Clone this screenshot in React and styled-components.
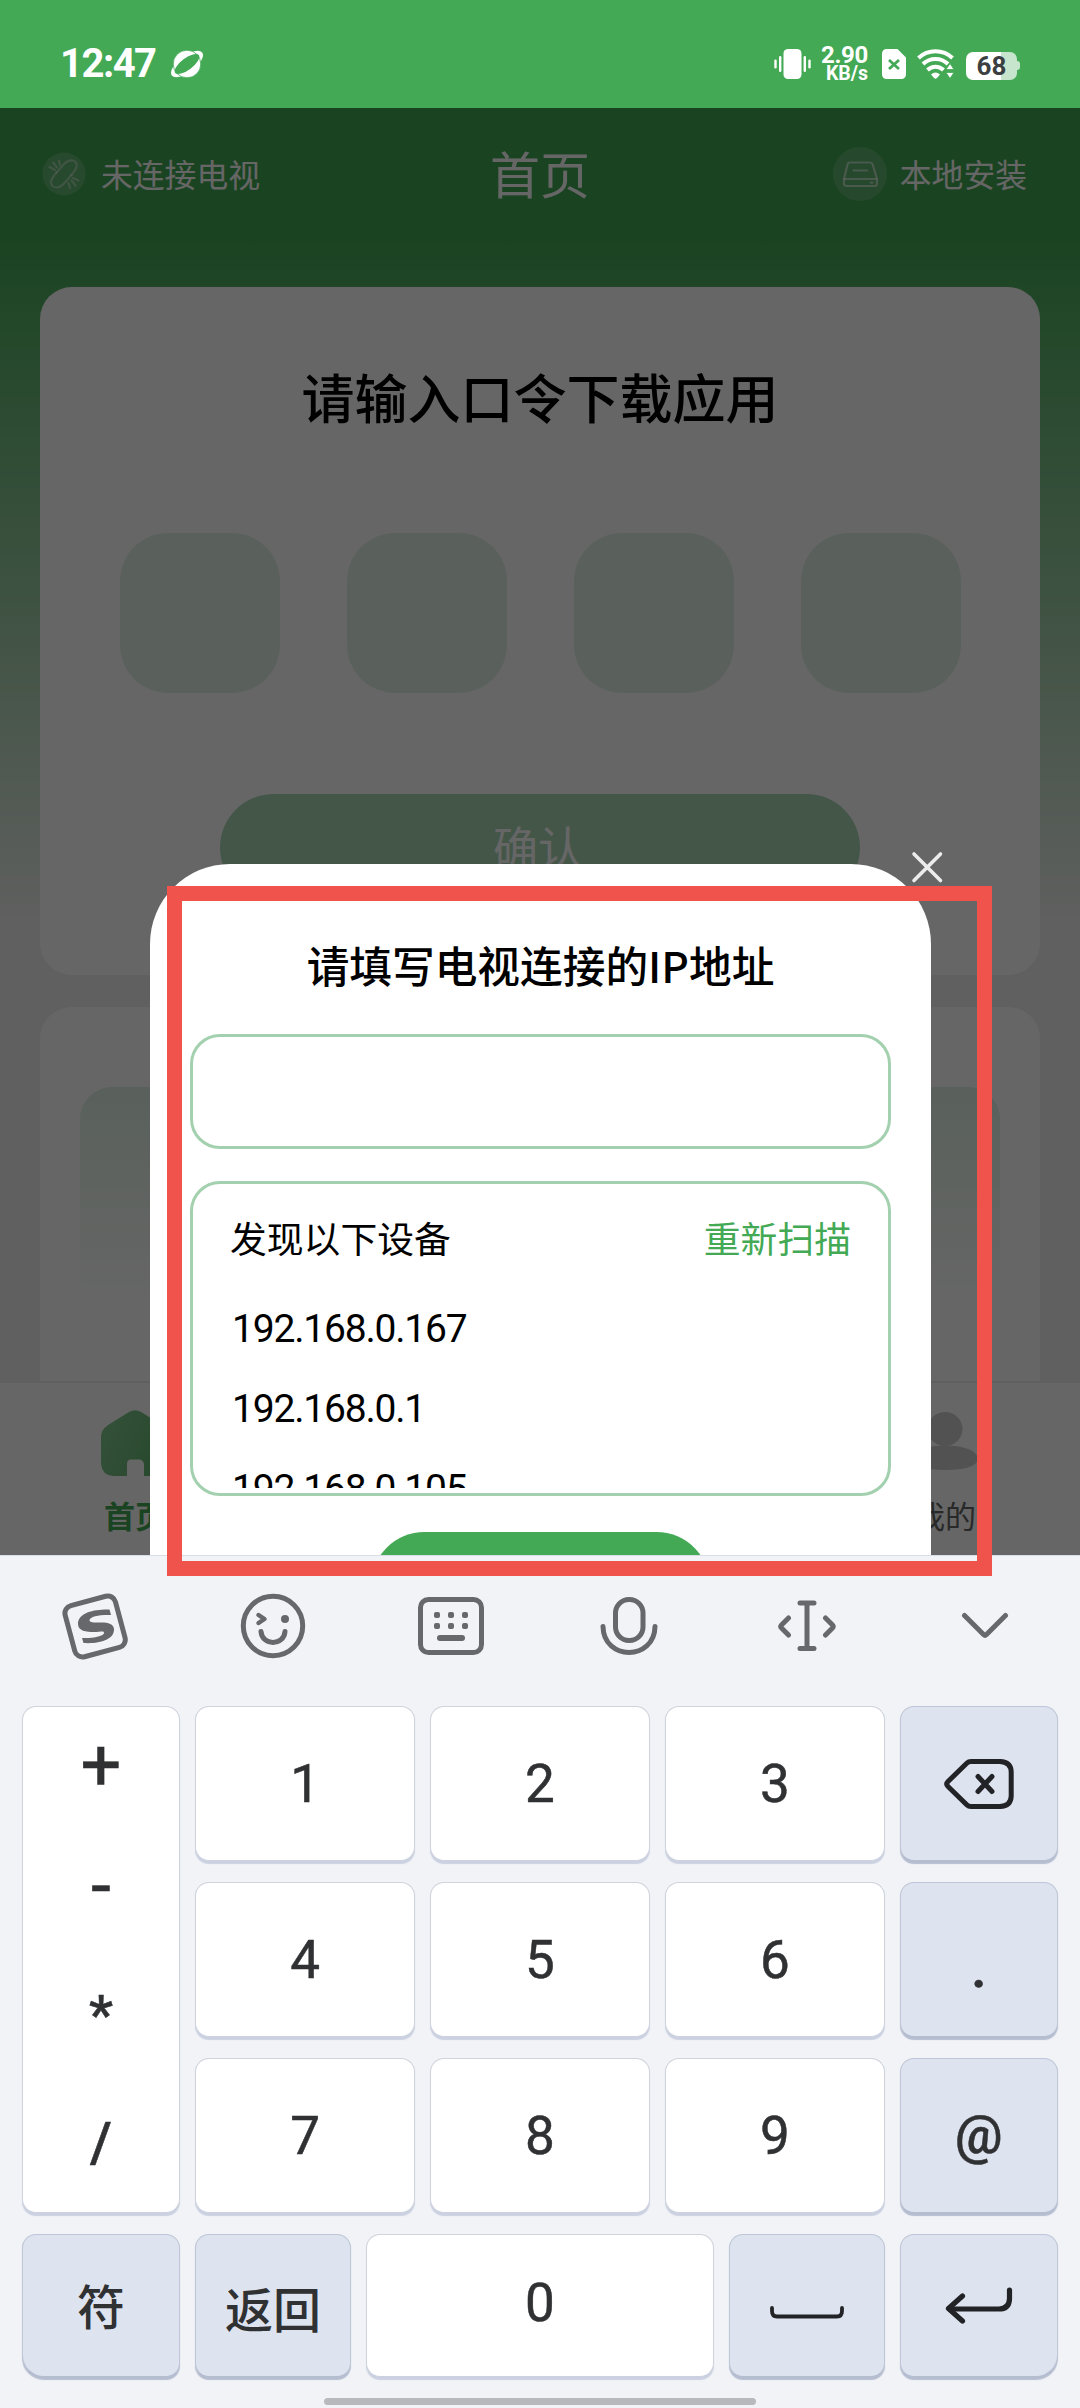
import React from "react";
import styled, { createGlobalStyle } from "styled-components";

const sans = `Roboto, "Noto Sans CJK SC", sans-serif`;
const cjk = `"Noto Sans CJK SC", sans-serif`;
const green = "#43a955";

const GlobalStyle = createGlobalStyle`
  * { box-sizing: border-box; }
  body { margin: 0; background: #f0f0f0; font-family: ${sans}; }
`;

const Screen = styled.div`
  position: relative;
  width: 1080px;
  height: 2408px;
  overflow: hidden;
  display: flex;
  flex-direction: column;
`;

/* ---------- status bar ---------- */
const StatusBar = styled.header`
  height: 108px;
  flex: none;
  display: flex;
  align-items: center;
  justify-content: space-between;
  padding: 20px 60px 0 60px;
  background: ${green};
  color: #fff;
`;
const StatusGroup = styled.div`
  display: flex;
  align-items: center;
  gap: ${(p) => p.$gap}px;
`;
const Clock = styled.span`
  width: 97px;
  font: 700 40px/40px ${sans};
  letter-spacing: -1.5px;
  white-space: nowrap;
`;
const NetSpeed = styled.div`
  display: flex;
  flex-direction: column;
  align-items: flex-end;
  width: 46px;
  margin-right: 3px;
  font-weight: 700;
`;
const SpeedValue = styled.span`
  font-size: 24px;
  line-height: 20px;
  letter-spacing: -0.3px;
`;
const SpeedUnit = styled.span`
  font-size: 19.5px;
  line-height: 18px;
`;
const Battery = styled.div`
  display: flex;
  align-items: center;
  padding-top: 3px;
`;
const BatteryBody = styled.div`
  width: 51px;
  height: 28px;
  border-radius: 7px;
  background: linear-gradient(90deg, #fff 69%, #c7e5cc 69%);
  color: #3b3f42;
  font: 700 26px/29px ${sans};
  text-align: center;
`;
const BatteryTip = styled.div`
  width: 3px;
  height: 9px;
  border-radius: 0 3px 3px 0;
  background: #c7e5cc;
`;

/* ---------- app page ---------- */
const Stage = styled.main`
  position: relative;
  height: 1447px;
  flex: none;
  overflow: hidden;
`;
const Page = styled.div`
  height: 100%;
  display: flex;
  flex-direction: column;
  background: linear-gradient(180deg, ${green} 132px, #f0f0f0 822px);
`;
const AppBar = styled.div`
  height: 179px;
  flex: none;
  display: grid;
  grid-template-columns: 1fr auto 1fr;
  align-items: center;
  padding: 0 53px 48px 42px;
  color: #fff;
`;
const BarAction = styled.div`
  display: flex;
  align-items: center;
  justify-self: ${(p) => (p.$end ? "end" : "start")};
  gap: ${(p) => (p.$end ? 13 : 15)}px;
  font: 400 31.8px/44px ${cjk};
`;
const BarLabel = styled.span`
  padding-bottom: 2px;
`;
const BarTitle = styled.h1`
  margin: 0 0 4px 11px;
  font: 400 50px/60px ${cjk};
`;
const Card = styled.section`
  flex: none;
  margin: 0 40px;
  height: ${(p) => p.$height}px;
  border-radius: ${(p) => (p.$open ? "32px 32px 0 0" : "32px")};
  background: #fff;
  display: flex;
  flex-direction: column;
  align-items: center;
`;
const CardTitle = styled.h2`
  margin: 74px 0 100.5px;
  font: 500 53px/71px ${cjk};
  color: #000;
`;
const CodeRow = styled.div`
  display: flex;
  gap: 67px;
`;
const CodeBox = styled.div`
  width: 160px;
  height: 160px;
  border-radius: 48px;
  background: #e1f2e6;
`;
const ConfirmButton = styled.div`
  margin-top: 101px;
  width: 640px;
  height: 107px;
  padding-right: 4px;
  border-radius: 54px;
  background: #aad7b4;
  color: #fff;
  font: 400 45px/103px ${cjk};
  text-align: center;
`;
const Banner = styled.div`
  margin-top: 80px;
  width: 920px;
  height: 222px;
  border-radius: 32px;
  background: linear-gradient(180deg, #e0f2e6, #fff);
`;
const Spacer = styled.div`
  height: 32px;
  flex: none;
`;
const TabBar = styled.nav`
  flex: 1;
  display: flex;
  justify-content: space-between;
  background: #fff;
  border-top: 2px solid #eee;
`;
const Tab = styled.div`
  width: 270px;
  display: flex;
  flex-direction: column;
  align-items: center;
  padding-top: 27px;
  gap: 17px;
  font: ${(p) => (p.$active ? 700 : 400)} 31px/44px ${cjk};
  color: ${(p) => (p.$active ? green : "#666")};
`;

/* ---------- dialog ---------- */
const Overlay = styled.div`
  position: absolute;
  inset: 0;
  background: rgba(0, 0, 0, 0.6);
`;
const Dialog = styled.div`
  position: absolute;
  left: 150px;
  top: 756px;
  width: 781px;
  height: 860px;
  padding: 70px 40px 0;
  border-radius: 80px 80px 0 0;
  background: #fff;
  display: flex;
  flex-direction: column;
  align-items: center;
`;
const CloseIcon = styled.svg`
  position: absolute;
  left: 911px;
  top: 743px;
`;
const DialogTitle = styled.h3`
  margin: 0 0 40px;
  font: 500 42.7px/60px ${cjk};
  color: #000;
`;
const AddressInput = styled.div`
  width: 701px;
  height: 115px;
  flex: none;
  border: 3px solid #a3d0ae;
  border-radius: 30px;
`;
const DeviceBox = styled.div`
  width: 701px;
  height: 315px;
  flex: none;
  margin: 32px 0 36px;
  padding: 28px 37px 5px;
  border: 3px solid #a3d0ae;
  border-radius: 30px;
  display: flex;
  flex-direction: column;
`;
const DeviceHeader = styled.div`
  display: flex;
  flex: none;
  justify-content: space-between;
  font: 400 36.8px/50px ${cjk};
  color: #000;
`;
const Rescan = styled.span`
  color: ${green};
`;
const DeviceList = styled.div`
  flex: 1;
  overflow: hidden;
  padding-top: 27px;
`;
const Device = styled.div`
  height: 80px;
  padding-left: 2px;
  font: 400 39px/80px ${sans};
  letter-spacing: -1.2px;
  color: #000;
`;
const DialogButton = styled.div`
  width: 339px;
  height: 107px;
  border-radius: 54px;
  background: ${green};
  flex: none;
`;

/* ---------- keyboard ---------- */
const Keyboard = styled.section`
  flex: 1;
  display: flex;
  flex-direction: column;
  align-items: center;
  background: #f1f3f7;
  border-top: 1px solid #d9dde5;
`;
const Toolbar = styled.div`
  width: 1068px;
  height: 140px;
  margin-bottom: 10px;
  display: grid;
  grid-template-columns: repeat(6, 178px);
  align-items: center;
  justify-items: center;
  color: #66686c;
`;
const Pad = styled.div`
  width: 1036px;
  display: grid;
  grid-template-columns: 158px 220px 219.5px 220px 158px;
  grid-template-rows: repeat(3, 155px);
  column-gap: 15.1px;
  row-gap: 21px;
`;
const BottomRow = styled.div`
  width: 1036px;
  margin-top: 21px;
  display: grid;
  grid-template-columns: 158px 156px 347.5px 156px 158px;
  grid-template-rows: 143px;
  column-gap: 15.1px;
`;
const Key = styled.div`
  display: flex;
  align-items: center;
  justify-content: center;
  border-radius: ${(p) => p.$radius || "14px"};
  border: 1px solid ${(p) => (p.$tinted ? "#bfc6d6" : "#cfd3dc")};
  border-bottom-color: ${(p) => (p.$tinted ? "#b5bdd0" : "#cbd1e0")};
  background: ${(p) => (p.$tinted ? "#dee3f0" : "#fff")};
  box-shadow: 0 2.5px 1px ${(p) => (p.$tinted ? "#b5bdd0" : "#cbd1e0")};
  color: #303133;
  font: ${(p) => p.$weight || 400} ${(p) => p.$size || 53}px/1 ${sans};
  padding-bottom: ${(p) => p.$lift || 0}px;
  padding-top: ${(p) => p.$drop || 0}px;
  -webkit-text-stroke: ${(p) => (p.$cjk ? 0 : 0.5)}px #303133;
`;
const SymbolKey = styled(Key)`
  grid-row: span 3;
  flex-direction: column;
  justify-content: flex-start;
`;
const Sym = styled.span`
  height: ${(p) => p.$height}px;
  line-height: ${(p) => p.$height}px;
  font-size: ${(p) => p.$size}px;
  font-weight: ${(p) => p.$weight || 400};
`;
const CjkLabel = styled.span`
  font: 500 48px/60px ${cjk};
`;
const HomeIndicator = styled.div`
  width: 432px;
  height: 7px;
  margin-top: 21px;
  border-radius: 4px;
  background: #b8b9bd;
`;

/* ---------- annotation ---------- */
const Highlight = styled.div`
  position: absolute;
  left: 166.5px;
  top: 886px;
  width: 825px;
  height: 689.5px;
  border: 15.3px solid #f0534b;
`;

const stroke = { fill: "none", stroke: "currentColor", strokeLinecap: "round", strokeLinejoin: "round" };

const OrbitIcon = () => (
  <svg width="32" height="30" viewBox="0 0 32 30" overflow="visible">
    <ellipse cx="16" cy="15" rx="19" ry="8.3" transform="rotate(-37 16 15)" fill="#fff" />
    <circle cx="16" cy="15" r="13.8" fill="#fff" stroke={green} strokeWidth="0.8" />
    <ellipse cx="16" cy="15" rx="14.8" ry="5.8" transform="rotate(-37 16 15)" fill={green} />
  </svg>
);
const VibrateIcon = () => (
  <svg width="37" height="32" viewBox="0 0 37 32" fill="#fff">
    <rect x="9.5" y="1" width="18" height="30" rx="4.5" />
    <rect x="5" y="8" width="2.4" height="16" rx="1.2" />
    <rect x="0.3" y="11.5" width="2.4" height="9" rx="1.2" />
    <rect x="29.6" y="8" width="2.4" height="16" rx="1.2" />
    <rect x="34.3" y="11.5" width="2.4" height="9" rx="1.2" />
  </svg>
);
const SimIcon = () => (
  <svg width="24" height="30" viewBox="0 0 24 30">
    <path d="M4.500 0H15.500L24 8.500V25.500A4.500 4.500 0 0 1 19.500 30H4.500A4.500 4.500 0 0 1 0 25.500V4.500A4.500 4.500 0 0 1 4.500 0Z" fill="#fff" />
    <path d="M7 11L17 20M17 11L7 20" stroke={green} strokeWidth="2.8" />
  </svg>
);
const WifiIcon = () => (
  <svg width="38" height="30" viewBox="0 0 38 30">
    <g fill="none" stroke="#fff" strokeWidth="4">
      <path d="M1.500 9A25 25 0 0 1 35.500 9" />
      <path d="M6 15A18 18 0 0 1 31 15" />
      <path d="M10.500 21A11.500 11.500 0 0 1 26.500 21" />
    </g>
    <path d="M14 25.500Q18.500 21.500 23 25.500L20 29Q18.500 30.500 17 29Z" fill="#fff" />
    <path d="M33 14.500L37 20.500H29ZM33 29.500L37 23.500H29Z" fill="#fff" stroke={green} strokeWidth="0.8" />
  </svg>
);
const UnlinkIcon = () => (
  <svg width="44" height="44" viewBox="0 0 44 44">
    <circle cx="22" cy="22" r="21.500" fill="#fff" fillOpacity=".16" />
    <g fill="none" stroke="#fff" strokeOpacity=".4" strokeWidth="2.200" strokeLinecap="round">
      <path d="M14.500 20.500L22.500 11.500Q26 8 31 8.500Q35.500 10 34.500 15Q33.500 18 29.500 23" />
      <path d="M14.500 20.500Q9.500 26 9 30Q9.500 35.500 15 35.500Q19 35 22 31.500L29.500 23" />
      <path d="M7.500 15L13 18M11 10.500L15 15.500M17 8.500L18 13M26.500 31L28 36M29.500 28.500L33.500 33.500M31 26L36.500 28.500" />
    </g>
  </svg>
);
const DriveIcon = () => (
  <svg width="54" height="54" viewBox="0 0 54 54">
    <circle cx="27" cy="27" r="27" fill="#fff" fillOpacity=".15" />
    <g fill="none" stroke="#fff" strokeOpacity=".55" strokeWidth="2.200" strokeLinejoin="round" strokeLinecap="round">
      <path d="M17 15.500H37Q39 15.500 39.700 17.500L44 32V36.500Q44 39 41.500 39H13.500Q11 39 11 36.500V32L14.500 17.500Q15 15.500 17 15.500Z" />
      <path d="M11.500 32H43.500M20.500 23.500H34M38 35.700H39.500" />
    </g>
  </svg>
);
const HomeIcon = () => (
  <svg width="68" height="66" viewBox="0 0 68 66">
    <defs>
      <linearGradient id="home" x1="0" y1="0" x2="1" y2="0.4">
        <stop offset="0" stopColor="#84c98f" />
        <stop offset="1" stopColor="#66b875" />
      </linearGradient>
    </defs>
    <path d="M28 2Q34 -1.500 40 2L61 15Q68 20 68 27V54Q67 65 56 66H43V54Q42 49.500 38 49.500H30Q26 49.500 26 54V66H12Q1 65 0 54V27Q0 20 7 15Z" fill="url(#home)" />
  </svg>
);
const PersonIcon = () => (
  <svg width="66" height="66" viewBox="0 0 66 66" fill="#cdcdcd">
    <ellipse cx="33" cy="19" rx="17.500" ry="17" />
    <path d="M0 49Q2 36 33 35.500Q64 36 66 49Q64 60 33 60Q2 60 0 49Z" />
  </svg>
);

const SogouIcon = () => (
  <svg width="68" height="68" viewBox="0 0 68 68">
    <rect x="8" y="8" width="52" height="53" rx="8" transform="rotate(-15 34 34)" {...stroke} strokeWidth="5" />
    <path d="M48.500 17.500C35 17 17 20 17 32C17 39 25 40 33 40C40 40 43 38.500 43 41C43 44 32 46.500 21 46L22.500 51C38 52 53.500 48 53 37C52.500 31 46 30 36 30.500C31 30.500 28.500 30 28.500 28C29 24.500 39 22.500 50 23Z" fill="currentColor" />
  </svg>
);
const SmileIcon = () => (
  <svg width="66" height="66" viewBox="0 0 66 66">
    <circle cx="33" cy="33" r="29.700" {...stroke} strokeWidth="5" />
    <circle cx="45" cy="26" r="4" fill="currentColor" />
    <path d="M18.500 22L24.500 26L18.500 30" {...stroke} strokeWidth="4.500" />
    <path d="M21 38.500C22 53 44 53 45 38.500" {...stroke} strokeWidth="5" />
  </svg>
);
const KeyboardIcon = () => (
  <svg width="66" height="60" viewBox="0 0 66 60">
    <rect x="2.500" y="3.500" width="61" height="53" rx="8" {...stroke} strokeWidth="5" />
    <g fill="currentColor">
      {[19, 33, 47].map((x) => (
        <g key={x}>
          <rect x={x - 3} y="16" width="6" height="6" rx="2" />
          <rect x={x - 3} y="27" width="6" height="6" rx="2" />
        </g>
      ))}
      <rect x="19" y="39" width="28" height="6" rx="3" />
    </g>
  </svg>
);
const MicIcon = () => (
  <svg width="60" height="60" viewBox="0 0 60 60" {...stroke} strokeWidth="5">
    <rect x="16.500" y="3.500" width="27.500" height="41" rx="13.500" />
    <path d="M4 30.500C4.500 65 55.500 65 56 30.500" />
  </svg>
);
const CursorIcon = () => (
  <svg width="60" height="54" viewBox="0 0 60 54" {...stroke} strokeWidth="5">
    <path d="M23 4H37M30 4V49.500M23 49.500H37M11.500 19L4.500 26Q3 27.500 4.500 29L11.500 36M48.500 19L55.500 26Q57 27.500 55.500 29L48.500 36" />
  </svg>
);
const ChevronIcon = () => (
  <svg width="48" height="28" viewBox="0 0 48 28" {...stroke} strokeWidth="5">
    <path d="M3.500 3.500L22.500 22.500Q24 24 25.500 22.500L44.500 3.500" />
  </svg>
);
const BackspaceIcon = () => (
  <svg width="70" height="50" viewBox="0 0 70 50" fill="none" stroke="#222326" strokeWidth="5" strokeLinecap="round" strokeLinejoin="round">
    <path d="M27 2.500H56Q67 3 67.200 13V37Q67 47 56 47.500H27Q24.500 47.500 23 46L4 27.500Q1.500 25 4 22.500L23 4Q24.500 2.500 27 2.500Z" />
    <path d="M34 17.500L48 32.500M48 17.500L34 32.500" />
  </svg>
);
const SpaceIcon = () => (
  <svg width="74" height="14" viewBox="0 0 74 14" fill="none" stroke="#222326" strokeWidth="3.800" strokeLinecap="round">
    <path d="M2 2V5Q2 10.500 7 10.500H67Q72 10.500 72 5V2" />
  </svg>
);
const EnterIcon = () => (
  <svg width="68" height="38" viewBox="0 0 68 38" fill="none" stroke="#222326" strokeWidth="5.200" strokeLinecap="round" strokeLinejoin="round">
    <path d="M64.500 3V12Q64 22 54 22H5" />
    <path d="M17.500 9L3.500 21.500L17.500 34" />
  </svg>
);

export default function App() {
  return (
    <>
      <GlobalStyle />
      <Screen>
        <StatusBar>
          <StatusGroup $gap={14}>
            <Clock>12:47</Clock>
            <OrbitIcon />
          </StatusGroup>
          <StatusGroup $gap={11}>
            <VibrateIcon />
            <NetSpeed>
              <SpeedValue>2.90</SpeedValue>
              <SpeedUnit>KB/s</SpeedUnit>
            </NetSpeed>
            <SimIcon />
            <WifiIcon />
            <Battery>
              <BatteryBody>68</BatteryBody>
              <BatteryTip />
            </Battery>
          </StatusGroup>
        </StatusBar>

        <Stage>
          <Page>
            <AppBar>
              <BarAction>
                <UnlinkIcon />
                <BarLabel>未连接电视</BarLabel>
              </BarAction>
              <BarTitle>首页</BarTitle>
              <BarAction $end>
                <DriveIcon />
                <BarLabel>本地安装</BarLabel>
              </BarAction>
            </AppBar>
            <Card $height={688}>
              <CardTitle>请输入口令下载应用</CardTitle>
              <CodeRow>
                <CodeBox />
                <CodeBox />
                <CodeBox />
                <CodeBox />
              </CodeRow>
              <ConfirmButton>确认</ConfirmButton>
            </Card>
            <Spacer />
            <Card $height={374} $open>
              <Banner />
            </Card>
            <TabBar>
              <Tab $active>
                <HomeIcon />
                首页
              </Tab>
              <Tab>
                <PersonIcon />
                我的
              </Tab>
            </TabBar>
          </Page>
          <Overlay />
          <Dialog>
            <DialogTitle>请填写电视连接的IP地址</DialogTitle>
            <AddressInput />
            <DeviceBox>
              <DeviceHeader>
                <span>发现以下设备</span>
                <Rescan>重新扫描</Rescan>
              </DeviceHeader>
              <DeviceList>
                <Device>192.168.0.167</Device>
                <Device>192.168.0.1</Device>
                <Device>192.168.0.105</Device>
              </DeviceList>
            </DeviceBox>
            <DialogButton />
          </Dialog>
          <CloseIcon width="34" height="34" viewBox="0 0 34 34" stroke="#ececec" strokeWidth="3.600" strokeLinecap="round">
            <path d="M3 3L29.500 29.500M29.500 3L3 29.500" />
          </CloseIcon>
        </Stage>

        <Keyboard>
          <Toolbar>
            <SogouIcon />
            <SmileIcon />
            <KeyboardIcon />
            <MicIcon />
            <CursorIcon />
            <ChevronIcon />
          </Toolbar>
          <Pad>
            <SymbolKey>
              <Sym $height={115} $size={72}>+</Sym>
              <Sym $height={128} $size={72}>-</Sym>
              <Sym $height={130} $size={54} $weight={500}>*</Sym>
              <Sym $height={127} $size={56} $weight={500}>/</Sym>
            </SymbolKey>
            <Key $drop={2}>1</Key>
            <Key $drop={2}>2</Key>
            <Key $drop={2}>3</Key>
            <Key $tinted><BackspaceIcon /></Key>
            <Key $drop={2}>4</Key>
            <Key $drop={2}>5</Key>
            <Key $drop={2}>6</Key>
            <Key $tinted $drop={16} $weight={500} $size={57}>.</Key>
            <Key $drop={2}>7</Key>
            <Key $drop={2}>8</Key>
            <Key $drop={2}>9</Key>
            <Key $tinted $weight={500}>@</Key>
          </Pad>
          <BottomRow>
            <Key $tinted $cjk $lift={3} $radius="14px 14px 14px 22px"><CjkLabel>符</CjkLabel></Key>
            <Key $tinted $cjk $drop={2}><CjkLabel>返回</CjkLabel></Key>
            <Key $lift={4}>0</Key>
            <Key $tinted $drop={14}><SpaceIcon /></Key>
            <Key $tinted $radius="14px 14px 22px 14px"><EnterIcon /></Key>
          </BottomRow>
          <HomeIndicator />
        </Keyboard>
        <Highlight />
      </Screen>
    </>
  );
}
